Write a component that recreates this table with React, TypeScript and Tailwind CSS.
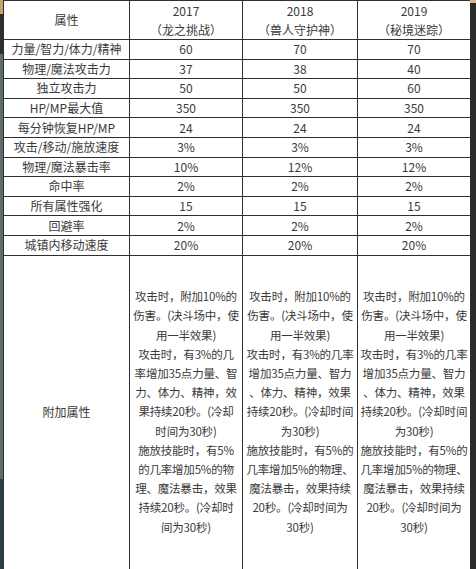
import React from "react";

const rows: [string, string, string, string][] = [
  ["力量/智力/体力/精神", "60", "70", "70"],
  ["物理/魔法攻击力", "37", "38", "40"],
  ["独立攻击力", "50", "50", "60"],
  ["HP/MP最大值", "350", "350", "350"],
  ["每分钟恢复HP/MP", "24", "24", "24"],
  ["攻击/移动/施放速度", "3%", "3%", "3%"],
  ["物理/魔法暴击率", "10%", "12%", "12%"],
  ["命中率", "2%", "2%", "2%"],
  ["所有属性强化", "15", "15", "15"],
  ["回避率", "2%", "2%", "2%"],
  ["城镇内移动速度", "20%", "20%", "20%"],
];

const linesA = [
  "攻击时，附加10%的",
  "伤害。(决斗场中，使",
  "用一半效果)",
  "攻击时，有3%的几",
  "率增加35点力量、智",
  "力、体力、精神，效",
  "果持续20秒。(冷却",
  "时间为30秒)",
  "施放技能时，有5%",
  "的几率增加5%的物",
  "理、魔法暴击，效果",
  "持续20秒。(冷却时",
  "间为30秒)",
];

const linesB = [
  "攻击时，附加10%的",
  "伤害。(决斗场中，使",
  "用一半效果)",
  "攻击时，有3%的几率",
  "增加35点力量、智力",
  "、体力、精神，效果",
  "持续20秒。(冷却时间",
  "为30秒)",
  "施放技能时，有5%的",
  "几率增加5%的物理、",
  "魔法暴击，效果持续",
  "20秒。(冷却时间为",
  "30秒)",
];

function Lines({ lines }: { lines: string[] }) {
  return (
    <div className="flex flex-col items-center text-[11.5px] leading-[19.2px] tracking-[-0.2px]">
      {lines.map((l, i) => (
        <span key={i} className="whitespace-nowrap">
          {l}
        </span>
      ))}
    </div>
  );
}

const cell = "border border-[#2f2f2f] text-center align-middle p-0";

export default function App() {
  return (
    <div
      className="flex h-[569px] w-[476px] overflow-hidden bg-white text-[12px] text-[#3a3a3a]"
      style={{ fontFamily: '"Noto Sans CJK SC", "Noto Sans", sans-serif' }}
    >
      <div className="flex w-[3px] flex-col">
        <div className="h-[14px] bg-[#c9a46a]" />
        <div className="h-[40px] bg-[#2e2e2e]" />
        <div className="flex-1 bg-[#5d6b6c]" />
        <div className="h-[90px] bg-[#2f3d44]" />
      </div>
      <div className="flex w-[467px] flex-col">
        <div className="flex h-[3px]">
          <div className="w-[32px] bg-[#b9935e]" />
          <div className="flex-1 bg-white" />
          <div className="w-[60px] bg-[#e0b57a]" />
        </div>
        <table className="w-[467px] table-fixed border-collapse">
          <colgroup>
            <col className="w-[126px]" />
            <col className="w-[113px]" />
            <col className="w-[115px]" />
            <col className="w-[113px]" />
          </colgroup>
          <tbody>
            <tr className="h-[38px]">
              <td className={cell}>属性</td>
              <td className={`${cell} leading-[19px]`}>
                2017
                <br />（龙之挑战）
              </td>
              <td className={`${cell} leading-[19px]`}>
                2018
                <br />（兽人守护神）
              </td>
              <td className={`${cell} leading-[19px]`}>
                2019
                <br />（秘境迷踪）
              </td>
            </tr>
            {rows.map((r) => (
              <tr key={r[0]} className="h-[19.6px]">
                {r.map((v, i) => (
                  <td key={i} className={`${cell} leading-[18px]`}>
                    {v}
                  </td>
                ))}
              </tr>
            ))}
            <tr className="h-[314px]">
              <td className={cell}>附加属性</td>
              <td className={cell}>
                <Lines lines={linesA} />
              </td>
              <td className={cell}>
                <Lines lines={linesB} />
              </td>
              <td className={cell}>
                <Lines lines={linesB} />
              </td>
            </tr>
          </tbody>
        </table>
      </div>
      <div className="flex w-[6px] flex-col">
        <div className="h-[3px] bg-[#e0b57a]" />
        <div className="flex-1 bg-[#2b2b2b]" />
      </div>
    </div>
  );
}
